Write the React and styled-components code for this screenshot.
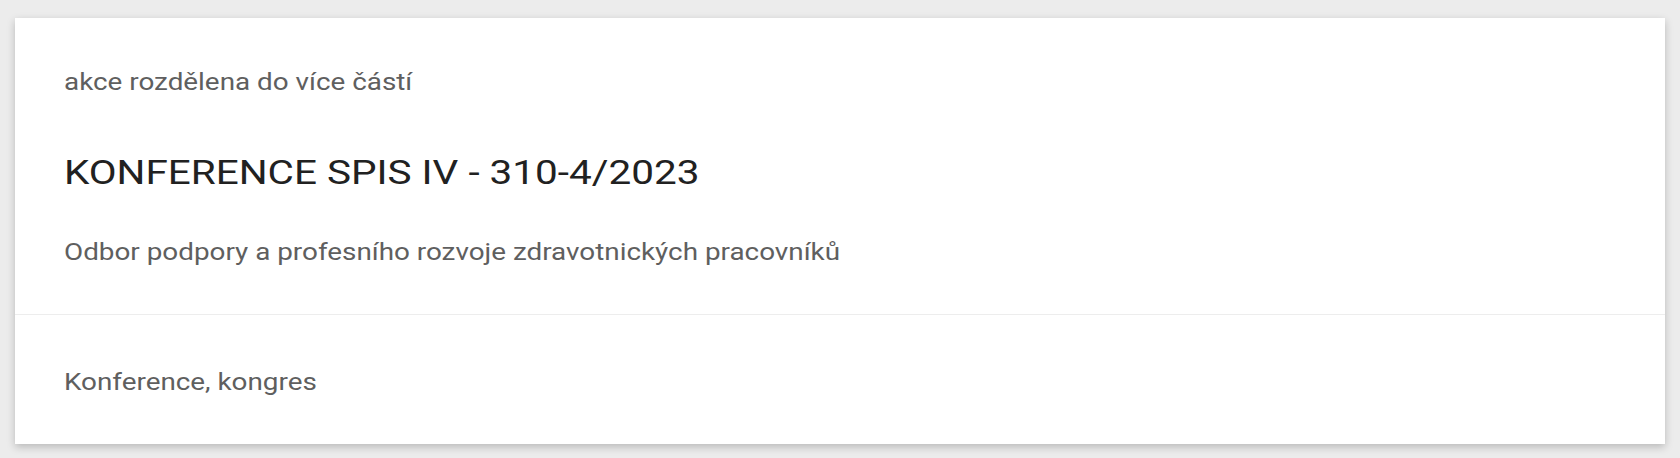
import React from "react";
import styled, { createGlobalStyle } from "styled-components";

const Global = createGlobalStyle`
    html, body {
        margin: 0;
        padding: 0;
        background: #ececec;
        font-family: Roboto, "Liberation Sans", sans-serif;
    }
`;

const Page = styled.main`
    padding: 18px 15px 14px;
`;

const Card = styled.section`
    background: #fff;
    box-shadow: 0 3px 8px rgba(0, 0, 0, 0.22);
`;

const Section = styled.div`
    padding: ${(p) => p.pad};
    border-bottom: ${(p) => (p.divider ? "1px solid #ededed" : "none")};
`;

// the type in this layout is set a bit wide, hence the scaleX
const Note = styled.p`
    margin: 0;
    width: max-content;
    font-size: 24px;
    line-height: 32px;
    color: #5f5f5f;
    white-space: nowrap;
    transform: scaleX(1.16);
    transform-origin: left center;
`;

const Title = styled.h2`
    margin: 54px 0 44px;
    width: max-content;
    font-size: 34px;
    line-height: 40px;
    font-weight: 400;
    color: #212121;
    white-space: nowrap;
    transform: scaleX(1.19);
    transform-origin: left center;
`;

const App = () => {
    return (
        <>
            <Global />
            <Page>
                <Card>
                    <Section divider pad="48px 49px 46px">
                        <Note>akce rozdělena do více částí</Note>
                        <Title>KONFERENCE SPIS IV - 310-4/2023</Title>
                        <Note>Odbor podpory a profesního rozvoje zdravotnických pracovníků</Note>
                    </Section>
                    <Section pad="51px 49px 46px">
                        <Note>Konference, kongres</Note>
                    </Section>
                </Card>
            </Page>
        </>
    );
};

export default App;
